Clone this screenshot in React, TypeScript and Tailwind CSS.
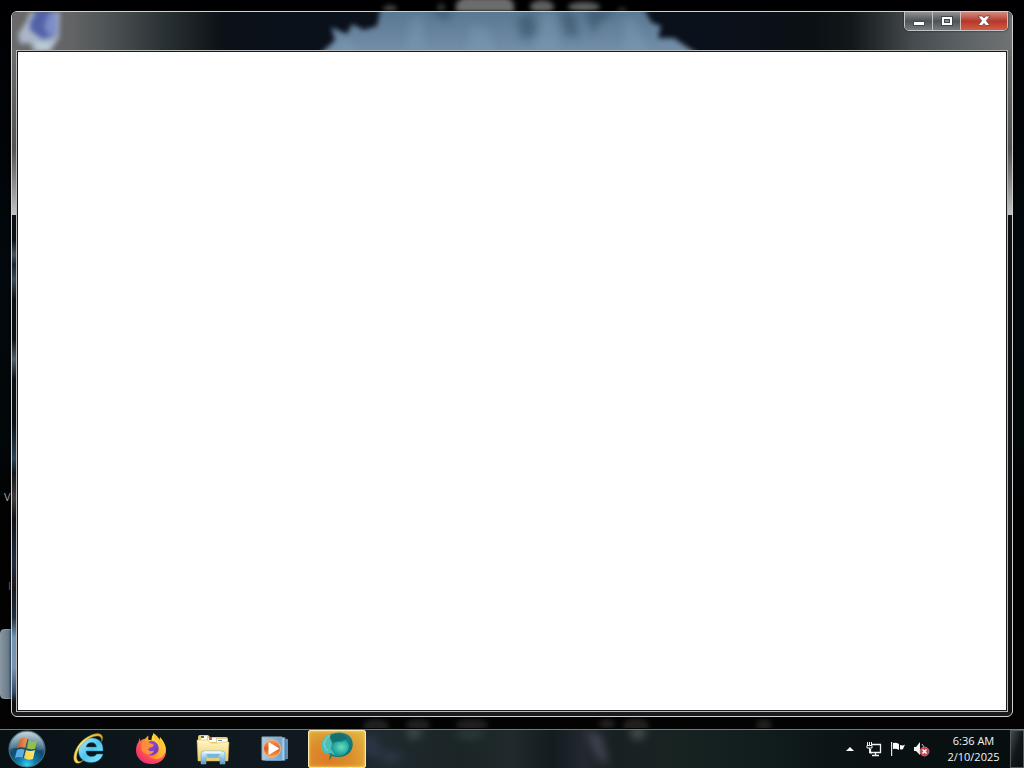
import type { ReactNode } from 'react';

function Wallpaper() {
  return (
    <svg className="absolute inset-0 h-full w-full" viewBox="0 0 1024 768" preserveAspectRatio="none" aria-hidden="true">
      <defs>
        <filter id="soft" x="-5%" y="-100%" width="110%" height="300%" colorInterpolationFilters="sRGB"><feGaussianBlur stdDeviation="2.5" /></filter>
        <linearGradient id="night" x1="0" y1="0" x2="0" y2="1">
          <stop offset="0" stopColor="#000002" /><stop offset=".35" stopColor="#02080c" />
          <stop offset=".58" stopColor="#02070a" /><stop offset=".65" stopColor="#030203" /><stop offset="1" stopColor="#040303" />
        </linearGradient>
      </defs>
      <rect width="1024" height="768" fill="url(#night)" />
      <g filter="url(#soft)" fill="#5c5e5f">
        <path d="M456 16V3l8-6h43l7 6v13z" fill="#6b6d6d" />
        <ellipse cx="390" cy="9" rx="7" ry="4" opacity=".7" />
        <ellipse cx="441" cy="8" rx="4" ry="5" opacity=".5" />
        <ellipse cx="542" cy="7" rx="12" ry="7" />
        <ellipse cx="584" cy="7" rx="16" ry="5" />
        <ellipse cx="622" cy="11" rx="5" ry="3" opacity=".6" />
      </g>
      <g filter="url(#soft)" fill="#393735" opacity=".55">
        <ellipse cx="376" cy="726" rx="13" ry="7" /><ellipse cx="418" cy="725" rx="12" ry="6" />
        <ellipse cx="472" cy="725" rx="16" ry="6" /><ellipse cx="607" cy="724" rx="8" ry="5" />
        <ellipse cx="636" cy="726" rx="13" ry="8" /><ellipse cx="764" cy="725" rx="8" ry="6" />
      </g>
    </svg>
  );
}

function TitleGlass() {
  return (
    <svg className="absolute inset-0 h-full w-full" viewBox="12 12 1000 38" preserveAspectRatio="none" aria-hidden="true">
      <defs>
        <linearGradient id="glass">
          <stop offset="0" stopColor="#696969" /><stop offset=".06" stopColor="#626465" />
          <stop offset=".1" stopColor="#4b5153" /><stop offset=".15" stopColor="#2b3235" />
          <stop offset=".21" stopColor="#0c1117" /><stop offset=".3" stopColor="#0b111b" />
          <stop offset=".7" stopColor="#0b111b" /><stop offset=".8" stopColor="#0b1015" />
          <stop offset=".84" stopColor="#121819" /><stop offset=".9" stopColor="#454b4e" />
          <stop offset=".95" stopColor="#5b6265" /><stop offset="1" stopColor="#707273" />
        </linearGradient>
        <filter id="bloom" x="-20%" y="-60%" width="140%" height="220%" colorInterpolationFilters="sRGB"><feGaussianBlur stdDeviation="4" /></filter>
        <filter id="petal" x="-20%" y="-40%" width="140%" height="180%" colorInterpolationFilters="sRGB"><feGaussianBlur stdDeviation="2.8" /></filter>
        <linearGradient id="shade" x1="0" y1="0" x2="0" y2="1">
          <stop offset="0" stopColor="#52718a" /><stop offset="1" stopColor="#7893af" />
        </linearGradient>
      </defs>
      <rect x="12" y="12" width="1000" height="38" fill="url(#glass)" />
      <path d="M314 60L335 40L331 27L347 34L352 24L364 30L377 26L382 0H640L651 22L661 26L658 38L674 38L706 60z" fill="url(#shade)" filter="url(#petal)" />
      <g fill="#8ba8c0" opacity=".28" filter="url(#bloom)">
        <path d="M410 20l12-5 4 35h-20zM542 12h13l5 40h-25zM624 20l10-4 15 38h-26zM470 24l20 5 5 25h-28z" />
        <path d="M342 37l12 7 5 12h-25z" />
      </g>
      <g fill="#344f64" opacity=".6" filter="url(#bloom)">
        <path d="M428 8h24l-5 14zM517 20l14-8 6 20-14 9zM561 10l14 5 4 23-14-4zM584 8h34l-21 17-4 10z" />
      </g>
      <g filter="url(#petal)">
        <path d="M18 34l8-12 4-10h30l-1 26-9 14H34l-4-9-10 1z" fill="#aab6c8" />
        <path d="M30 23l6-12h16l3 26-13 2-12-9z" fill="#5262a8" />
        <path d="M49 13h8v20l-7 4-6-10z" fill="#7d8dc8" />
        <path d="M36 41l9 3 8-2-5 8H37z" fill="#bdcdd9" />
      </g>
    </svg>
  );
}

function CaptionButtons() {
  return (
    <div className="relative -mt-px mr-1 flex h-5 overflow-hidden rounded-b-[5px] border border-[#c1c3c4] shadow-[0_0_2px_#111]">
      <button aria-label="Minimize" className="flex w-7 items-center justify-center border-r border-[#bfc2c4] bg-linear-to-b from-[#929495] from-0% via-[#4e5355] via-50% to-[#777c80]">
        <svg width="14" height="12" viewBox="0 0 14 12" aria-hidden="true"><path d="M1.5 6.5h11v4h-11z" fill="#fff" stroke="#414749" /></svg>
      </button>
      <button aria-label="Maximize" className="flex w-7 items-center justify-center border-r border-[#d1bfc0] bg-linear-to-b from-[#929495] from-0% via-[#4e5355] via-50% to-[#777c80]">
        <svg width="14" height="12" viewBox="0 0 14 12" aria-hidden="true"><path d="M1 1h12v10H1z" fill="#414749" /><path d="M2 2h10v8H2z" fill="#fff" /><path d="M4 4h6v4H4z" fill="#414749" /><path d="M5 5h4v2H5z" fill="#858b8e" /></svg>
      </button>
      <button aria-label="Close" className="flex w-[46px] items-center justify-center bg-linear-to-b from-[#cf8c81] from-0% via-[#b4372a] via-50% to-[#d65b43]">
        <svg width="14" height="12" viewBox="0 0 14 12" aria-hidden="true"><path d="M1 1h4.3L7 3 8.7 1H13L9.3 5.7 13 10.5H8.7L7 8.4l-1.7 2.1H1l3.7-4.8z" fill="#fff" stroke="#723e3a" strokeWidth=".8" /></svg>
      </button>
    </div>
  );
}

function SideGlass({ glow }: { glow?: boolean }) {
  return (
    <div aria-hidden="true" className="flex w-1 shrink-0 flex-col bg-[#101112]">
      <div className="h-[165px] bg-linear-to-b from-[#6c6c6c] via-[#535353] via-60% to-[#c4c4c4]" />
      {glow && (
        <div className="flex-1 bg-[linear-gradient(180deg,#0b1015_0%,#0b1015_5%,#46535e_8%,#182530_10%,#3c4b57_13%,#0b1015_17%,#0b1015_25%,#515e68_29%,#0b1015_33%,#0b1015_42%,#294457_49%,#111518_52%,#403b40_57%,#101215_61%,#202d40_70%,#19191e_75%,#1f2f40_81%,#7294b5_85%,#7895b1_91%,#354d69_96%,#101112_98%)]" />
      )}
    </div>
  );
}

function AppWindow() {
  return (
    <section aria-label="Application window" className="relative z-10 flex flex-1 flex-col overflow-hidden rounded-md border border-[#d0d1d1] bg-[#1c1a1e] shadow-[0_0_3px_#000]">
      <header className="relative flex h-[38px] shrink-0 items-start justify-end">
        <TitleGlass />
        <CaptionButtons />
      </header>
      <div className="flex flex-1">
        <SideGlass glow />
        <main className="flex flex-1 border border-[#b8baba] bg-white">
          <div className="flex-1 border border-[#17191b] bg-white" />
        </main>
        <SideGlass />
      </div>
      <div className="h-1 shrink-0" />
    </section>
  );
}

function StartOrb() {
  return (
    <svg width="38" height="38" viewBox="0 0 38 38" aria-hidden="true">
      <defs>
        <radialGradient id="orb" cx=".5" cy=".94" r=".95">
          <stop offset="0" stopColor="#34d3f5" /><stop offset=".24" stopColor="#117eae" />
          <stop offset=".55" stopColor="#12486c" /><stop offset="1" stopColor="#8aa5b2" />
        </radialGradient>
        <linearGradient id="orbShine" x1="0" y1="0" x2="0" y2="1"><stop stopColor="#d1dde1" stopOpacity=".85" /><stop offset="1" stopColor="#8aabb7" stopOpacity=".25" /></linearGradient>
        <linearGradient id="flagRed"><stop stopColor="#c65a31" /><stop offset="1" stopColor="#f3a05b" /></linearGradient>
        <linearGradient id="flagGold"><stop stopColor="#fccd39" /><stop offset="1" stopColor="#ffea84" /></linearGradient>
      </defs>
      <circle cx="19" cy="19" r="18" fill="url(#orb)" stroke="#527282" />
      <path d="M2 19A17 17 0 0136 19Q27 22 19 19T2 19z" fill="url(#orbShine)" />
      <path d="M12 9q4-3 8 0l-2 9q-4-2-9 0z" fill="url(#flagRed)" />
      <path d="M21 10q4 3 8 0l-2 9q-4 2-8-1z" fill="#8fc14c" />
      <path d="M9 20q4-2 8 0l-2 8q-4-2-8 0z" fill="#5caee2" />
      <path d="M18 20q4 2 9 0l-2 9q-5 2-9-1z" fill="url(#flagGold)" />
      <path d="M7 19q6-2 11 0 5 2 11 0M20 9l-5 19" fill="none" stroke="#244c62" strokeWidth="1" />
    </svg>
  );
}

function InternetExplorerIcon() {
  return (
    <svg width="32" height="32" viewBox="0 0 32 32" aria-hidden="true">
      <defs>
        <linearGradient id="ie" x1="0" y1="0" x2="1" y2="1"><stop stopColor="#b4f0fc" /><stop offset=".5" stopColor="#4fc5ec" /><stop offset="1" stopColor="#8ceafa" /></linearGradient>
        <linearGradient id="ring" x1="0" y1="1" x2="1" y2="0"><stop stopColor="#f6d548" /><stop offset=".5" stopColor="#ffe87c" /><stop offset="1" stopColor="#dfac23" /></linearGradient>
      </defs>
      <path fillRule="evenodd" d="M30 18H13c.2 4 2.5 5.5 5.7 5.5 2.5 0 4-.8 5-2.5H30c-1.6 5.5-5.8 8.5-12 8.5C10.7 29.500 5.500 25 5.500 17.500S10.800 5 18.500 5 30.500 10 30 18zM13.2 14h10.300c-.5-3-2.200-4.400-5-4.400s-4.800 1.500-5.300 4.400z" fill="url(#ie)" stroke="#1f75a5" strokeWidth=".5" />
      <path d="M28.500 9c.8-4-1-6.200-4.500-6C16 3.500 7 11 4.500 19c-1.500 5-1 9 1.500 9.500 1.500.3 3-.5 4.500-1.500C8 30 4.500 31.300 2.500 29.500-.5 27 .5 20 4.500 13.500 9.500 6 18.500.4 25 .6c4.600.2 5.800 4 3.500 8.400z" fill="url(#ring)" stroke="#95751c" strokeWidth=".4" />
    </svg>
  );
}

function FirefoxIcon() {
  return (
    <svg width="32" height="32" viewBox="0 0 32 32" aria-hidden="true">
      <defs>
        <radialGradient id="fox" cx=".8" cy=".1" r="1.050"><stop stopColor="#fff345" /><stop offset=".3" stopColor="#ffcb37" /><stop offset=".52" stopColor="#ff8338" /><stop offset=".8" stopColor="#fb425a" /><stop offset="1" stopColor="#e02b86" /></radialGradient>
        <linearGradient id="globe" x1="0" y1="0" x2="1" y2="1"><stop stopColor="#a64fe9" /><stop offset="1" stopColor="#6338b5" /></linearGradient>
        <linearGradient id="tail" x1="1" y1="0" x2="0" y2="1"><stop stopColor="#ffe43d" /><stop offset=".6" stopColor="#ffad35" /><stop offset="1" stopColor="#fb753c" /></linearGradient>
      </defs>
      <path d="M4.500 4.500L5 8q2-2 5-2.200l3.400-3.200-.2 4.200 3.400.4q-.5-4 2.300-6.700c1 3 4.800 4 6 7.500l.8-2.300c5.300 4.500 7 13.200 3.500 18.700C26.600 29 21.800 31 16 31 7.300 31 1 25 1 17.500c0-4 1-6.600 2.600-8.700z" fill="url(#fox)" />
      <circle cx="16.500" cy="15" r="7.200" fill="url(#globe)" />
      <path d="M7 10q5-3 8.500.5 2 1 3.500 1-1 3-4 3l-2 2q2 3 6 1-1 4-6 4-6-1-7-7z" fill="#ff8d3c" />
      <path d="M18 0q0 5 4 8 5 6 1 12-4 5-10 3 7 6 14 1 6-6 2-14-2-4-4-6l-.5 3Q23 3 18 0z" fill="url(#tail)" />
    </svg>
  );
}

function ExplorerIcon() {
  return (
    <svg width="34" height="32" viewBox="0 0 34 32" aria-hidden="true">
      <defs>
        <linearGradient id="folder" x1="0" y1="0" x2="0" y2="1"><stop stopColor="#fff8c8" /><stop offset="1" stopColor="#ecca68" /></linearGradient>
        <linearGradient id="holder" x1="0" y1="0" x2="0" y2="1"><stop stopColor="#e4f8ff" /><stop offset="1" stopColor="#539acb" /></linearGradient>
      </defs>
      <path d="M2 28V4q0-2 2-2h8l2 2h16q2 0 2 2v22z" fill="#e9cd78" />
      <path d="M5 3h6v4H5z" fill="#fffbe1" /><path d="M5 3h3v2H5z" fill="#41754c" />
      <path d="M12 5h8v4h-8z" fill="#fff" /><path d="M13 4h3v3h-3z" fill="#df593b" />
      <path d="M21 6h10v4H21z" fill="#fff" /><path d="M22 7h4v1h-4z" fill="#578fc3" />
      <path d="M1 7h11l3 3h8l2-1h8l-1 19H2z" fill="url(#folder)" stroke="#d3ae4c" strokeWidth=".5" />
      <path d="M5 31V21q0-3 3-3h18q3 0 3 3v10h-5v-7q-7 2-14 0v7z" fill="url(#holder)" stroke="#6ba9c9" strokeWidth=".6" />
      <path d="M10 21h14l-2 3H12z" fill="#72b7de" /><path d="M8 19h17" stroke="#fff" />
    </svg>
  );
}

function MediaPlayerIcon() {
  return (
    <svg width="28" height="26" viewBox="0 0 28 26" aria-hidden="true">
      <defs>
        <linearGradient id="disc" x1="0" y1="0" x2="0" y2="1"><stop stopColor="#f39b5a" /><stop offset=".5" stopColor="#dd5d22" /><stop offset="1" stopColor="#ff9c3c" /></linearGradient>
        <linearGradient id="cases"><stop stopColor="#b5cbd8" /><stop offset="1" stopColor="#74a2c6" /></linearGradient>
      </defs>
      <path d="M6 2l21 1v20L7 25z" fill="#5a8db8" />
      <path d="M4 1.500h20v23H4z" fill="#a3cce8" stroke="#467ea8" />
      <path d="M1 1h20v23H1z" fill="url(#cases)" stroke="#8cb2cc" />
      <circle cx="11" cy="12.500" r="8.500" fill="url(#disc)" stroke="#f3b58a" />
      <path d="M7.500 6l11 6.500-11 6.500z" fill="#fff" />
    </svg>
  );
}

function FishIcon() {
  return (
    <svg width="34" height="30" viewBox="0 0 34 30" aria-hidden="true">
      <defs>
        <linearGradient id="sea" x1="0" y1="0" x2="1" y2="1"><stop stopColor="#2a9290" /><stop offset=".5" stopColor="#1c7f80" /><stop offset="1" stopColor="#087170" /></linearGradient>
        <radialGradient id="fin" cx=".6" cy=".45"><stop stopColor="#6fdcc6" /><stop offset=".6" stopColor="#36b8a8" /><stop offset="1" stopColor="#1f9a93" /></radialGradient>
      </defs>
      <path d="M9 3C15-1 29-1 32 8c3 9-3 17-13 17-3 0-5 0-7-1l-3 5 1-7-7-2 1-12z" fill="url(#sea)" />
      <path d="M12 12q5-3 9-2l5-2 2 3 1 3q-1 9-10 10-6 0-9-3z" fill="url(#fin)" />
      <path d="M10 2Q2 5 1 14q1 6 5 8l5-1 4 2-4-6 1-6-2-4z" fill="#4cc0b8" />
      <path d="M10 3q-5 3-6 9 1 5 4 7" fill="none" stroke="#88d9d0" />
      <path d="M12 3q9-4 16 3l-5 2-10 2-3-5z" fill="#14706f" />
    </svg>
  );
}

function TaskButton({ label, active, children }: { label: string; active?: boolean; children: ReactNode }) {
  return (
    <button
      aria-label={label}
      className={
        active
          ? 'flex h-[38px] w-[58px] items-center justify-center rounded-xs border border-[#fbe9b0] bg-[radial-gradient(ellipse_at_35%_75%,#dc7a26_0%,#dc8f2c_45%,#e2bd48_100%)] pb-1 shadow-[inset_0_0_3px_#ffe071]'
          : 'flex h-[38px] w-[58px] items-center justify-center'
      }
    >
      {children}
    </button>
  );
}

function Tray() {
  return (
    <div className="ml-auto flex h-full items-center">
      <button aria-label="Show hidden icons" className="mr-[10px] flex h-6 w-3 items-center justify-center">
        <svg width="8" height="4" viewBox="0 0 8 4" aria-hidden="true"><path d="M0 4l4-4 4 4z" fill="#fff" /></svg>
      </button>
      <div className="mr-[7px] flex items-center gap-2">
        <button aria-label="Network">
          <svg width="16" height="16" viewBox="0 0 16 16" fill="none" stroke="#f2f4f5" strokeWidth="1.300" aria-hidden="true">
            <path d="M6 3.500h8.500v8H4.500V8M9.500 12v2M6 14.500h7" /><path d="M1.500 1v3M3.500 1v3M5.500 1v3M1 4.500h5V7H1zM3.500 7v5H6" strokeWidth="1" />
          </svg>
        </button>
        <button aria-label="Action Center">
          <svg width="16" height="16" viewBox="0 0 16 16" aria-hidden="true"><path d="M1 1h1.200v14H1z" fill="#dfe5e8" /><path d="M3 2q3-1 6 1v6q-3-2-6-1zM10 4q3 1 5-.5L13 8q-2 1-3 0z" fill="#fff" /></svg>
        </button>
        <button aria-label="Volume muted">
          <svg width="16" height="16" viewBox="0 0 16 16" aria-hidden="true"><path d="M0 6h2l4-5v13l-4-4H0z" fill="#f2f4f4" /><path d="M8 3q2 2 2 5" fill="none" stroke="#c0c7c9" /><circle cx="10.500" cy="10.500" r="4.500" fill="#c9404d" stroke="#ed7880" strokeWidth=".7" /><path d="M8.500 8.500l4 4m0-4l-4 4" stroke="#fff" strokeWidth="1.600" /></svg>
        </button>
      </div>
      <button className="w-[73px] text-center text-[11px] leading-4 text-[#f1f5f5]">
        <time className="flex flex-col" dateTime="2025-02-10T06:36"><span>6:36 AM</span><span>2/10/2025</span></time>
      </button>
      <button aria-label="Show desktop" className="h-full w-[14px] border border-[#535a5b] bg-linear-to-br from-[#454d4f] via-[#111819] via-50% to-[#090e0f]" />
    </div>
  );
}

function Taskbar() {
  return (
    <footer className="relative z-10 flex h-[39px] shrink-0 items-stretch border-t border-[#747c80] bg-[linear-gradient(90deg,#081014_0%,#0d171c_14%,#101a20_33%,#20292f_37%,#1b2526_45%,#202a2c_50%,#121c20_54%,#23282e_57%,#182122_60%,#182322_65%,#111c1d_75%,#0a1213_84%,#070e10_100%)] shadow-[0_-1px_0_#020303]">
      <svg className="absolute inset-0 h-full w-full" viewBox="0 0 1024 38" preserveAspectRatio="none" aria-hidden="true">
        <g filter="url(#bloom)" opacity=".7">
          <ellipse cx="414" cy="3" rx="8" ry="6" fill="#4a5b5a" /><ellipse cx="470" cy="4" rx="14" ry="5" fill="#354345" />
          <path d="M586 1l15 4 8 30-12-7z" fill="#4b5062" /><ellipse cx="638" cy="3" rx="8" ry="7" fill="#56605f" />
          <path d="M360 4h15l7 17-9 9-15-9zM380 21h20v12h-16z" fill="#303b50" />
        </g>
      </svg>
      <nav aria-label="Taskbar" className="relative flex w-full items-center">
        <button aria-label="Start" className="flex w-[60px] justify-start pl-2"><StartOrb /></button>
        <div className="flex gap-1">
          <TaskButton label="Internet Explorer"><InternetExplorerIcon /></TaskButton>
          <TaskButton label="Firefox"><FirefoxIcon /></TaskButton>
          <TaskButton label="Windows Explorer"><ExplorerIcon /></TaskButton>
          <TaskButton label="Windows Media Player"><MediaPlayerIcon /></TaskButton>
          <TaskButton label="Application" active><FishIcon /></TaskButton>
        </div>
        <Tray />
      </nav>
    </footer>
  );
}

export default function App() {
  return (
    <div className="relative flex min-h-screen flex-col overflow-hidden bg-black font-['Open_Sans','Noto_Sans',sans-serif]">
      <Wallpaper />
      <span className="absolute top-[489px] left-1 text-[11px] leading-4 text-[#a7a7a7]">V</span>
      <span className="absolute top-[578px] left-2 text-[11px] leading-4 text-[#63707c]">I</span>
      <div className="absolute top-[629px] left-0 h-[70px] w-4 rounded-sm border border-[#8797a5] bg-linear-to-r from-[#8b9296] to-[#45698b]" />
      <div className="flex flex-1 px-[11px] pt-[11px] pb-3">
        <AppWindow />
      </div>
      <Taskbar />
    </div>
  );
}
